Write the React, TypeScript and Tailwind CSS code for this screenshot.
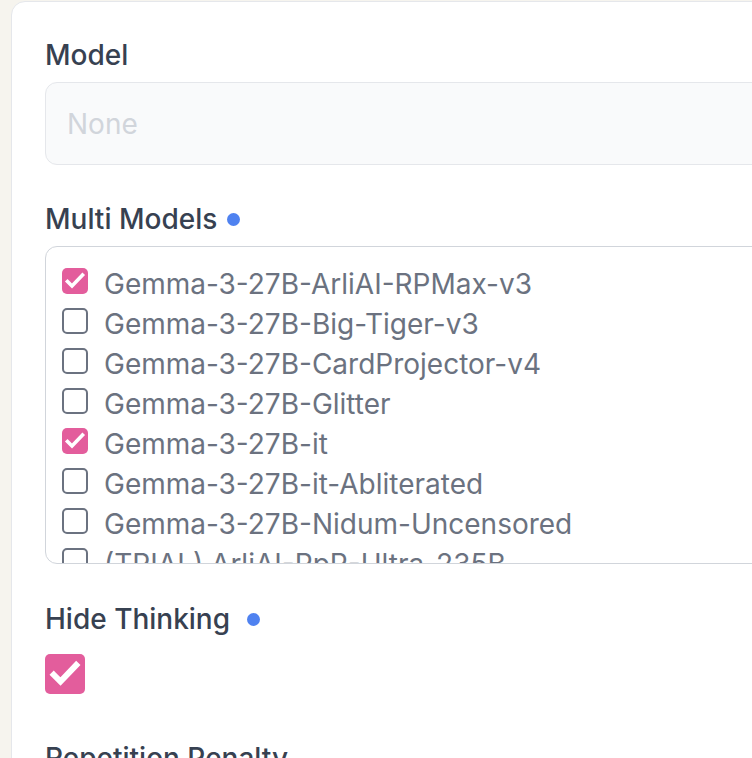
import React from "react";

const items: { name: string; checked: boolean }[] = [
  { name: "Gemma-3-27B-ArliAI-RPMax-v3", checked: true },
  { name: "Gemma-3-27B-Big-Tiger-v3", checked: false },
  { name: "Gemma-3-27B-CardProjector-v4", checked: false },
  { name: "Gemma-3-27B-Glitter", checked: false },
  { name: "Gemma-3-27B-it", checked: true },
  { name: "Gemma-3-27B-it-Abliterated", checked: false },
  { name: "Gemma-3-27B-Nidum-Uncensored", checked: false },
  { name: "(TRIAL) ArliAI-RpR-Ultra-235B", checked: false },
];

function Check({ size, stroke }: { size: number; stroke: number }) {
  return (
    <svg width={size} height={size} viewBox="0 0 24 24" fill="none">
      <path d="M4.5 12.5l4.5 4.5 10.5-11" stroke="white" strokeWidth={stroke} strokeLinecap="square" strokeLinejoin="miter" />
    </svg>
  );
}

export default function App() {
  return (
    <div
      className="w-[752px] h-[758px] overflow-hidden bg-[#f6f4ee]"
      style={{ fontFamily: "Inter, 'Noto Sans', sans-serif" }}
    >
      <div className="ml-[11px] mt-[1px] w-[820px] h-[900px] rounded-[14px] border border-[#e5e7eb] bg-white pl-[33px] pt-[32px]">
        <div className="text-[28px] leading-[42px] font-medium text-[#374151]">Model</div>
        <div className="mt-[6px] h-[83px] w-[760px] rounded-[12px] border border-[#e5e7eb] bg-[#f9fafb] pl-[21px] flex items-center text-[28px] text-[#d1d5db]">
          None
        </div>

        <div className="mt-[33px] flex items-center text-[28px] leading-[42px] font-medium text-[#374151]">
          Multi Models
          <span className="ml-[10px] mt-[1px] inline-block w-[13px] h-[13px] rounded-full bg-[#4f82f0]" />
        </div>
        <div className="mt-[6px] h-[318px] w-[760px] overflow-hidden rounded-[12px] border border-[#d1d5db] bg-white pl-[16px] pt-[14px]">
          {items.map((it) => (
            <div key={it.name} className="h-[40px] flex items-center">
              {it.checked ? (
                <div className="shrink-0 w-[26px] h-[26px] rounded-[5px] bg-[#e35d9c] flex items-center justify-center">
                  <Check size={24} stroke={3.6} />
                </div>
              ) : (
                <div className="shrink-0 w-[26px] h-[26px] rounded-[5px] border-2 border-[#6b7280] bg-white" />
              )}
              <span className="ml-[16px] mt-[5px] text-[28px] leading-[40px] text-[#6b7280] whitespace-nowrap">{it.name}</span>
            </div>
          ))}
        </div>

        <div className="mt-[34px] flex items-center text-[28px] leading-[42px] font-medium text-[#374151]">
          Hide Thinking
          <span className="ml-[17px] mt-[1px] inline-block w-[13px] h-[13px] rounded-full bg-[#4f82f0]" />
        </div>
        <div className="mt-[14px] w-[40px] h-[40px] rounded-[5px] bg-[#e35d9c] flex items-center justify-center">
          <Check size={36} stroke={4} />
        </div>

        <div className="mt-[43px] text-[28px] leading-[42px] font-medium text-[#374151]">Repetition Penalty</div>
      </div>
    </div>
  );
}
